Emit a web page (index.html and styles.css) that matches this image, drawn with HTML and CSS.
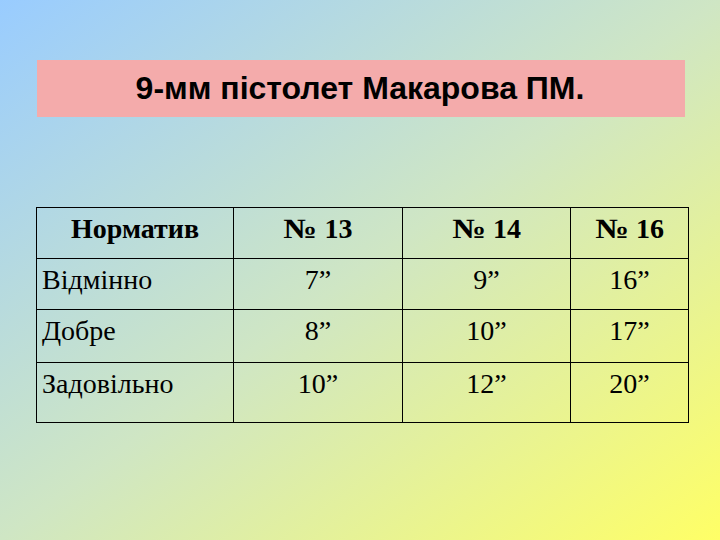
FILE: index.html
```html
<!DOCTYPE html>
<html>
<head>
<meta charset="utf-8">
<link rel="stylesheet" href="styles.css">
</head>
<body>
<div class="slide">
  <div class="title">9-мм пістолет Макарова ПМ.</div>
  <table class="norms">
    <colgroup>
      <col class="c1"><col class="c2"><col class="c3"><col class="c4">
    </colgroup>
    <tr class="head r1">
      <th>Норматив</th><th><span class="no">№</span> 13</th><th><span class="no">№</span> 14</th><th><span class="no">№</span> 16</th>
    </tr>
    <tr class="r2">
      <td class="name">Відмінно</td><td>7”</td><td>9”</td><td>16”</td>
    </tr>
    <tr class="r3">
      <td class="name">Добре</td><td>8”</td><td>10”</td><td>17”</td>
    </tr>
    <tr class="r4">
      <td class="name">Задовільно</td><td>10”</td><td>12”</td><td>20”</td>
    </tr>
  </table>
</div>
</body>
</html>
```
FILE: styles.css
```css
html, body {
  margin: 0;
  padding: 0;
}
.slide {
  width: 720px;
  height: 540px;
  background: linear-gradient(to bottom right, #99ccff 0%, #cfe6c4 50%, #ffff66 100%);
  padding-top: 60px;
  box-sizing: border-box;
  overflow: hidden;
}
.title {
  margin-left: 37px;
  width: 648px;
  height: 57px;
  background: #f4abab;
  font-family: "Liberation Sans", Arial, sans-serif;
  font-weight: bold;
  font-size: 32px;
  line-height: 57px;
  text-align: center;
  color: #000;
  box-sizing: border-box;
  padding-right: 2px;
}
.norms {
  margin-top: 90px;
  margin-left: 36px;
  border-collapse: collapse;
  font-family: "Liberation Serif", "Times New Roman", serif;
  font-size: 28px;
  color: #000;
}
.norms th, .norms td {
  border: 1.5px solid #000;
  padding: 0;
  vertical-align: top;
  text-align: center;
}
.c1 { width: 197px; }
.c2 { width: 169px; }
.c3 { width: 168px; }
.c4 { width: 118px; }
.norms th {
  font-weight: bold;
  padding-top: 5px;
}
.norms th .no {
  display: inline-block;
  transform: scaleX(1.2);
  margin: 0 3px;
}
.norms td {
  font-weight: normal;
  padding-top: 5px;
}
.norms td.name {
  text-align: left;
  padding-left: 5px;
}
.r1 { height: 51px; }
.r2 { height: 51px; }
.r3 { height: 53px; }
.r4 { height: 60px; }
```
